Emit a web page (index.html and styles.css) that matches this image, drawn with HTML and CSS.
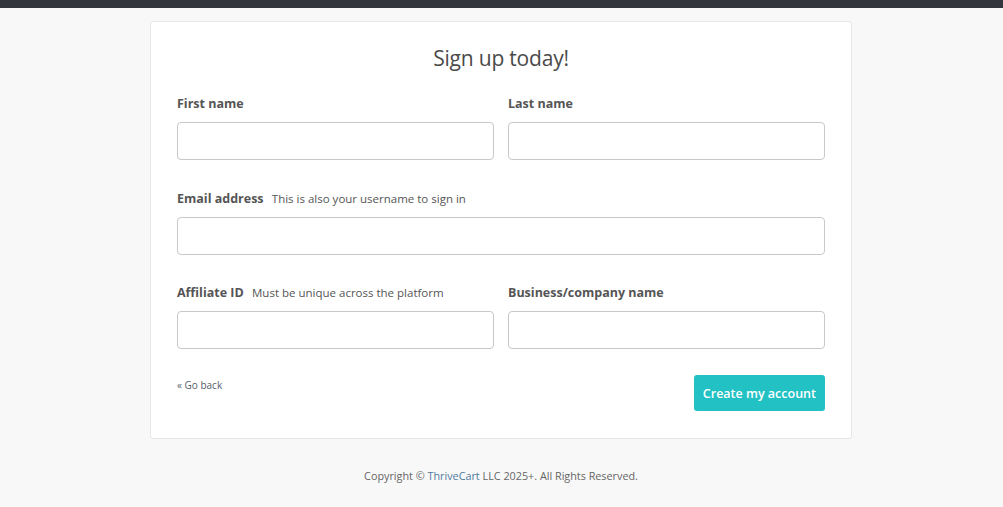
FILE: index.html
```html
<!DOCTYPE html>
<html lang="en">
<head>
<meta charset="utf-8">
<title>Sign up</title>
<link rel="stylesheet" href="styles.css">
</head>
<body>
<div class="topbar"></div>
<main class="page">
  <form class="card">
    <h1 class="title">Sign up today!</h1>
    <div class="row two">
      <div class="field">
        <label class="label">First name</label>
        <input class="input" type="text">
      </div>
      <div class="field">
        <label class="label">Last name</label>
        <input class="input" type="text">
      </div>
    </div>
    <div class="row mid">
      <div class="field">
        <label class="label">Email address <span class="hint">This is also your username to sign in</span></label>
        <input class="input" type="text">
      </div>
    </div>
    <div class="row two last">
      <div class="field">
        <label class="label">Affiliate ID <span class="hint">Must be unique across the platform</span></label>
        <input class="input" type="text">
      </div>
      <div class="field">
        <label class="label">Business/company name</label>
        <input class="input" type="text">
      </div>
    </div>
    <div class="actions">
      <a class="back" href="#">« Go back</a>
      <button class="btn" type="button">Create my account</button>
    </div>
  </form>
  <footer class="footer">Copyright © <a class="footlink" href="#">ThriveCart</a> LLC 2025+. All Rights Reserved.</footer>
</main>
</body>
</html>
```
FILE: styles.css
```css
* { box-sizing: border-box; }
html, body { margin: 0; padding: 0; }
body {
  background: #f8f8f8;
  font-family: "Open Sans", "Noto Sans", sans-serif;
  color: #555;
}
.topbar { height: 8px; background: #33363d; }
.page {
  display: flex;
  flex-direction: column;
  align-items: center;
  padding-top: 13px;
  padding-right: 1px;
}
.card {
  width: 702px;
  background: #fff;
  border: 1px solid #e6e6e6;
  border-radius: 3px;
  padding: 18px 26px 27px;
}
.title {
  margin: 0 0 19px;
  text-align: center;
  font-weight: 400;
  font-size: 21px;
  line-height: 36px;
  color: #4a4a4a;
  letter-spacing: -0.2px;
}
.row { display: grid; grid-template-columns: 1fr; gap: 14px; margin-bottom: 30px; }
.row.two { grid-template-columns: 1fr 1fr; }
.row.mid { margin-bottom: 29px; }
.row.last { margin-bottom: 26px; }
.field { display: flex; flex-direction: column; }
.label {
  font-size: 12.5px;
  font-weight: 700;
  color: #555;
  line-height: 18px;
  margin-bottom: 9px;
}
.hint { font-weight: 400; font-size: 11.5px; margin-left: 5px; color: #555; }
.input {
  height: 38px;
  border: 1px solid #c8c8c8;
  border-radius: 4px;
  background: #fff;
  font: inherit;
}
.actions { display: flex; justify-content: space-between; align-items: flex-start; }
.back { font-size: 10px; color: #555e6b; text-decoration: none; margin-top: 3px; }
.btn {
  height: 36px;
  padding: 0 9px;
  background: #22c1c3;
  color: #fff;
  border: none;
  border-radius: 3px;
  font-family: inherit;
  font-size: 12.5px;
  font-weight: 600;
}
.footer { margin-top: 29px; font-size: 10.8px; color: #666; }
.footlink { color: #4f7a9d; text-decoration: none; }
```
